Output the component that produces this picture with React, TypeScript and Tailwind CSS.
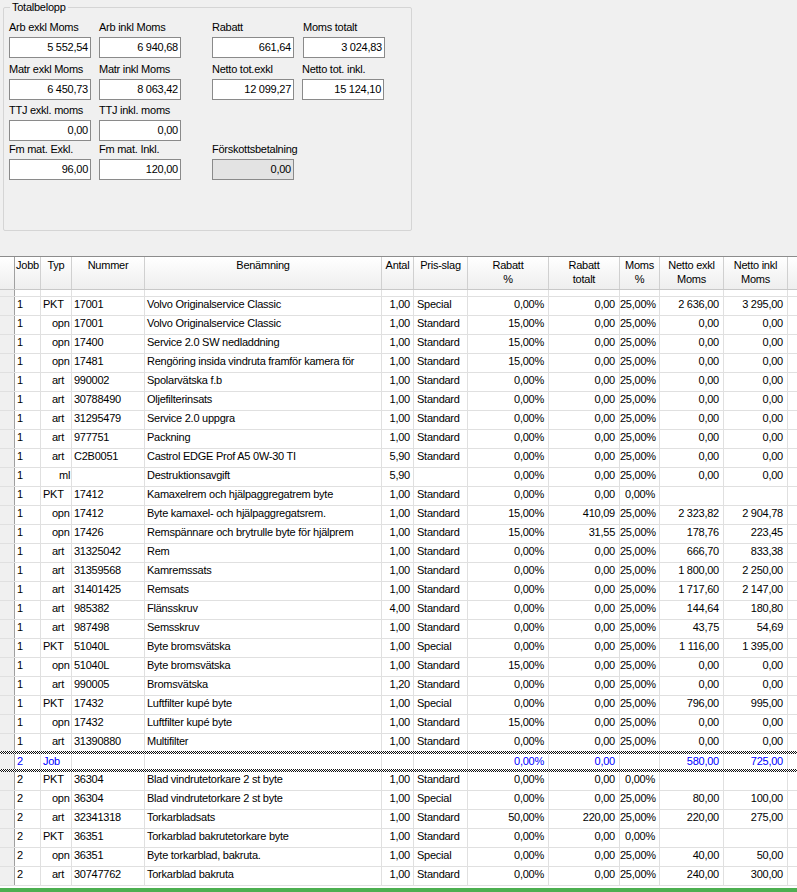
import React from 'react';

type Row = {
  jobb: string;
  typ: string;
  nr: string;
  name: string;
  antal: string;
  pris: string;
  rab: string;
  rabTot: string;
  moms: string;
  exkl: string;
  inkl: string;
};

const r = (
  jobb: string,
  typ: string,
  nr: string,
  name: string,
  antal: string,
  pris: string,
  rab: string,
  rabTot: string,
  moms: string,
  exkl: string,
  inkl: string
): Row => ({ jobb, typ, nr, name, antal, pris, rab, rabTot, moms, exkl, inkl });

const job1: Row[] = [
  r('1', 'PKT', '17001', 'Volvo Originalservice Classic', '1,00', 'Special', '0,00%', '0,00', '25,00%', '2 636,00', '3 295,00'),
  r('1', 'opn', '17001', 'Volvo Originalservice Classic', '1,00', 'Standard', '15,00%', '0,00', '25,00%', '0,00', '0,00'),
  r('1', 'opn', '17400', 'Service 2.0 SW nedladdning', '1,00', 'Standard', '15,00%', '0,00', '25,00%', '0,00', '0,00'),
  r('1', 'opn', '17481', 'Rengöring insida vindruta framför kamera för', '1,00', 'Standard', '15,00%', '0,00', '25,00%', '0,00', '0,00'),
  r('1', 'art', '990002', 'Spolarvätska f.b', '1,00', 'Standard', '0,00%', '0,00', '25,00%', '0,00', '0,00'),
  r('1', 'art', '30788490', 'Oljefilterinsats', '1,00', 'Standard', '0,00%', '0,00', '25,00%', '0,00', '0,00'),
  r('1', 'art', '31295479', 'Service 2.0 uppgra', '1,00', 'Standard', '0,00%', '0,00', '25,00%', '0,00', '0,00'),
  r('1', 'art', '977751', 'Packning', '1,00', 'Standard', '0,00%', '0,00', '25,00%', '0,00', '0,00'),
  r('1', 'art', 'C2B0051', 'Castrol EDGE Prof A5 0W-30 TI', '5,90', 'Standard', '0,00%', '0,00', '25,00%', '0,00', '0,00'),
  r('1', 'ml', '', 'Destruktionsavgift', '5,90', '', '0,00%', '0,00', '25,00%', '0,00', '0,00'),
  r('1', 'PKT', '17412', 'Kamaxelrem och hjälpaggregatrem byte', '1,00', 'Standard', '0,00%', '0,00', '0,00%', '', ''),
  r('1', 'opn', '17412', 'Byte kamaxel- och hjälpaggregatsrem.', '1,00', 'Standard', '15,00%', '410,09', '25,00%', '2 323,82', '2 904,78'),
  r('1', 'opn', '17426', 'Remspännare och brytrulle byte för hjälprem', '1,00', 'Standard', '15,00%', '31,55', '25,00%', '178,76', '223,45'),
  r('1', 'art', '31325042', 'Rem', '1,00', 'Standard', '0,00%', '0,00', '25,00%', '666,70', '833,38'),
  r('1', 'art', '31359568', 'Kamremssats', '1,00', 'Standard', '0,00%', '0,00', '25,00%', '1 800,00', '2 250,00'),
  r('1', 'art', '31401425', 'Remsats', '1,00', 'Standard', '0,00%', '0,00', '25,00%', '1 717,60', '2 147,00'),
  r('1', 'art', '985382', 'Flänsskruv', '4,00', 'Standard', '0,00%', '0,00', '25,00%', '144,64', '180,80'),
  r('1', 'art', '987498', 'Semsskruv', '1,00', 'Standard', '0,00%', '0,00', '25,00%', '43,75', '54,69'),
  r('1', 'PKT', '51040L', 'Byte bromsvätska', '1,00', 'Special', '0,00%', '0,00', '25,00%', '1 116,00', '1 395,00'),
  r('1', 'opn', '51040L', 'Byte bromsvätska', '1,00', 'Standard', '15,00%', '0,00', '25,00%', '0,00', '0,00'),
  r('1', 'art', '990005', 'Bromsvätska', '1,20', 'Standard', '0,00%', '0,00', '25,00%', '0,00', '0,00'),
  r('1', 'PKT', '17432', 'Luftfilter kupé byte', '1,00', 'Special', '0,00%', '0,00', '25,00%', '796,00', '995,00'),
  r('1', 'opn', '17432', 'Luftfilter kupé byte', '1,00', 'Standard', '15,00%', '0,00', '25,00%', '0,00', '0,00'),
  r('1', 'art', '31390880', 'Multifilter', '1,00', 'Standard', '0,00%', '0,00', '25,00%', '0,00', '0,00'),
];

const job2: Row[] = [
  r('2', 'PKT', '36304', 'Blad vindrutetorkare 2 st byte', '1,00', 'Standard', '0,00%', '0,00', '0,00%', '', ''),
  r('2', 'opn', '36304', 'Blad vindrutetorkare 2 st byte', '1,00', 'Special', '0,00%', '0,00', '25,00%', '80,00', '100,00'),
  r('2', 'art', '32341318', 'Torkarbladsats', '1,00', 'Standard', '50,00%', '220,00', '25,00%', '220,00', '275,00'),
  r('2', 'PKT', '36351', 'Torkarblad bakrutetorkare byte', '1,00', 'Standard', '0,00%', '0,00', '0,00%', '', ''),
  r('2', 'opn', '36351', 'Byte torkarblad, bakruta.', '1,00', 'Special', '0,00%', '0,00', '25,00%', '40,00', '50,00'),
  r('2', 'art', '30747762', 'Torkarblad bakruta', '1,00', 'Standard', '0,00%', '0,00', '25,00%', '240,00', '300,00'),
];

const typPad: Record<string, string> = {
  PKT: 'pl-[2px]',
  Job: 'pl-[2px]',
  opn: 'pl-[11px]',
  art: 'pl-[11px]',
  ml: 'pl-[18px]',
};

function Field({ label, value, disabled }: { label: string; value: string; disabled?: boolean }) {
  return (
    <div className="flex w-[82px] flex-col">
      <div className="h-[16px] whitespace-nowrap leading-[13px]">{label}</div>
      <div
        className={`flex h-[21px] items-center justify-end border border-[#8a8a8a] pr-[2px] ${
          disabled ? 'bg-[#e3e3e3]' : 'bg-white'
        }`}
      >
        {value}
      </div>
    </div>
  );
}

function Cells({ row, blue }: { row: Row; blue?: boolean }) {
  const cell = 'h-full shrink-0 overflow-hidden whitespace-nowrap border-r border-[#e0e0e0]';
  const num = `${cell} text-right pr-[4px]`;
  return (
    <>
      <div className="h-full w-[15px] shrink-0 border-r border-[#a0a0a0] bg-[#f0f0f0]" />
      <div className={`${cell} w-[26px] pl-[2px]`}>{row.jobb}</div>
      <div className={`${cell} w-[31px] ${typPad[row.typ] ?? ''}`}>{row.typ}</div>
      <div className={`${cell} w-[73px] pl-[2px]`}>{row.nr}</div>
      <div className={`${cell} w-[237px] pl-[2px]`}>{row.name}</div>
      <div className={`${cell} w-[32px] pr-[3px] text-right`}>{row.antal}</div>
      <div className={`${cell} w-[54px] pl-[3px]`}>{row.pris}</div>
      <div className={`${num} w-[81px]`}>{row.rab}</div>
      <div className={`${num} w-[71px]`}>{row.rabTot}</div>
      <div className={`${num} w-[40px] overflow-visible`}>{row.moms}</div>
      <div className={`${num} w-[64px]`}>{row.exkl}</div>
      <div className={`${num} w-[64px]`}>{row.inkl}</div>
      <div className={`h-full flex-1 ${blue ? '' : ''}`} />
    </>
  );
}

function GridRow({ row, last, short }: { row: Row; last?: boolean; short?: boolean }) {
  return (
    <div
      className={`flex leading-[15px] ${
        last ? 'h-[17px]' : short ? 'h-[19px] border-b border-[#e0e0e0]' : 'h-[19px] border-b border-[#e0e0e0]'
      }`}
    >
      <Cells row={row} />
    </div>
  );
}

const Band = () => (
  <div className="h-[3px] bg-[conic-gradient(#111_25%,#fff_0_50%,#111_0_75%,#fff_0)] bg-[length:2px_2px]" />
);

const headers: { label: React.ReactNode; w: string }[] = [
  { label: 'Jobb', w: 'w-[26px]' },
  { label: 'Typ', w: 'w-[31px]' },
  { label: 'Nummer', w: 'w-[73px]' },
  { label: 'Benämning', w: 'w-[237px]' },
  { label: 'Antal', w: 'w-[32px]' },
  { label: 'Pris-slag', w: 'w-[54px]' },
  { label: <>Rabatt<br />%</>, w: 'w-[81px]' },
  { label: <>Rabatt<br />totalt</>, w: 'w-[71px]' },
  { label: <>Moms<br />%</>, w: 'w-[40px]' },
  { label: <>Netto exkl<br />Moms</>, w: 'w-[64px]' },
  { label: <>Netto inkl<br />Moms</>, w: 'w-[64px]' },
];

export default function App() {
  const jobRow = r('2', 'Job', '', '', '', '', '0,00%', '0,00', '', '580,00', '725,00');
  return (
    <div className="h-[892px] w-[797px] overflow-hidden bg-[#f0f0f0] font-['Liberation_Sans',Arial,sans-serif] text-[11px] tracking-[-0.25px] text-black">
      {/* Totalbelopp */}
      <div className="h-[256px] pl-[3px] pt-[7px]">
        <div className="relative h-[224px] w-[409px] rounded-[2px] border border-[#d5d5d5] pl-[5px] pt-[13px]">
          <div className="absolute -top-[8px] left-[6px] bg-[#f0f0f0] px-[2px] leading-[14px]">Totalbelopp</div>
          <div className="flex">
            <Field label="Arb exkl Moms" value="5 552,54" />
            <div className="ml-[8px]"><Field label="Arb inkl Moms" value="6 940,68" /></div>
            <div className="ml-[31px]"><Field label="Rabatt" value="661,64" /></div>
            <div className="ml-[9px]"><Field label="Moms totalt" value="3 024,83" /></div>
          </div>
          <div className="mt-[5px] flex">
            <Field label="Matr exkl Moms" value="6 450,73" />
            <div className="ml-[8px]"><Field label="Matr inkl Moms" value="8 063,42" /></div>
            <div className="ml-[31px]"><Field label="Netto tot.exkl" value="12 099,27" /></div>
            <div className="ml-[8px]"><Field label="Netto tot. inkl." value="15 124,10" /></div>
          </div>
          <div className="mt-[4px] flex">
            <Field label="TTJ exkl. moms" value="0,00" />
            <div className="ml-[8px]"><Field label="TTJ inkl. moms" value="0,00" /></div>
          </div>
          <div className="mt-[2px] flex">
            <Field label="Fm mat. Exkl." value="96,00" />
            <div className="ml-[8px]"><Field label="Fm mat. Inkl." value="120,00" /></div>
            <div className="ml-[31px]"><Field label="Förskottsbetalning" value="0,00" disabled /></div>
          </div>
        </div>
      </div>

      {/* Grid */}
      <div className="bg-white">
        <div className="h-px bg-[#8c8c8c]" />
        <div className="flex h-[33px] border-b border-[#c8c8c8] bg-[linear-gradient(#ffffff,#eeeeee)] leading-[14px]">
          <div className="h-full w-[15px] shrink-0 border-r border-[#a0a0a0]" />
          {headers.map((h, i) => (
            <div key={i} className={`${h.w} h-full shrink-0 border-r border-[#d0d0d0] pt-[1px] text-center whitespace-nowrap`}>
              {h.label}
            </div>
          ))}
          <div className="flex-1" />
        </div>
        <div className="flex h-[7px] border-b border-[#e0e0e0]">
          <Cells row={r('', '', '', '', '', '', '', '', '', '', '')} />
        </div>
        {job1.map((row, i) => (
          <GridRow key={`a${i}`} row={row} last={i === job1.length - 1} />
        ))}
        <Band />
        <div className="flex h-[15px] leading-[14px] text-[#0000ff]">
          <Cells row={jobRow} blue />
        </div>
        <Band />
        {job2.map((row, i) => (
          <GridRow key={`b${i}`} row={row} />
        ))}
        <div className="h-[2px] bg-white" />
        <div className="h-[4px] bg-[#4caf50]" />
      </div>
    </div>
  );
}
